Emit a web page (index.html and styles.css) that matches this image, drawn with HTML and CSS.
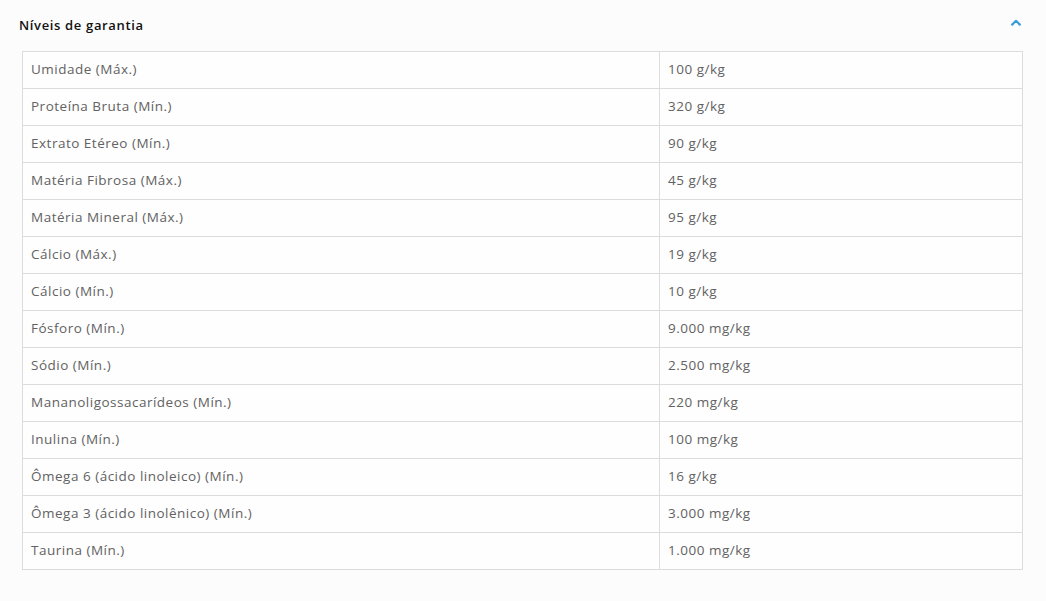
FILE: index.html
```html
<!DOCTYPE html>
<html lang="pt-BR">
<head>
<meta charset="utf-8">
<title>Níveis de garantia</title>
<link rel="stylesheet" href="styles.css">
</head>
<body>
<section class="panel">
  <header class="panel-head">
    <h2 class="panel-title">Níveis de garantia</h2>
    <svg class="chevron" width="10" height="7" viewBox="0 0 10 7" aria-hidden="true">
      <path d="M1.2 5.6 L5 1.8 L8.8 5.6" fill="none" stroke="#3a9fd8" stroke-width="2.2" stroke-linecap="round" stroke-linejoin="round"/>
    </svg>
  </header>
  <table class="levels">
    <tbody>
      <tr><td>Umidade (Máx.)</td><td>100 g/kg</td></tr>
      <tr><td>Proteína Bruta (Mín.)</td><td>320 g/kg</td></tr>
      <tr><td>Extrato Etéreo (Mín.)</td><td>90 g/kg</td></tr>
      <tr><td>Matéria Fibrosa (Máx.)</td><td>45 g/kg</td></tr>
      <tr><td>Matéria Mineral (Máx.)</td><td>95 g/kg</td></tr>
      <tr><td>Cálcio (Máx.)</td><td>19 g/kg</td></tr>
      <tr><td>Cálcio (Mín.)</td><td>10 g/kg</td></tr>
      <tr><td>Fósforo (Mín.)</td><td>9.000 mg/kg</td></tr>
      <tr><td>Sódio (Mín.)</td><td>2.500 mg/kg</td></tr>
      <tr><td>Mananoligossacarídeos (Mín.)</td><td>220 mg/kg</td></tr>
      <tr><td>Inulina (Mín.)</td><td>100 mg/kg</td></tr>
      <tr><td>Ômega 6 (ácido linoleico) (Mín.)</td><td>16 g/kg</td></tr>
      <tr><td>Ômega 3 (ácido linolênico) (Mín.)</td><td>3.000 mg/kg</td></tr>
      <tr><td>Taurina (Mín.)</td><td>1.000 mg/kg</td></tr>
    </tbody>
  </table>
</section>
</body>
</html>
```
FILE: styles.css
```css
html, body {
  margin: 0;
  padding: 0;
  background: #fdfcfd;
}
body {
  font-family: "Open Sans", "Liberation Sans", sans-serif;
  color: #555;
}
.panel-head {
  display: flex;
  align-items: center;
  justify-content: space-between;
  height: 51px;
  padding: 0 25px 0 19px;
  box-sizing: border-box;
}
.panel-title {
  margin: 0;
  font-size: 13px;
  font-weight: 600;
  color: #111;
  letter-spacing: 0.65px;
  position: relative;
  top: -1px;
}
.chevron {
  display: block;
  position: relative;
  top: -3px;
}
.levels {
  margin-left: 22px;
  width: 1001px;
  border-collapse: collapse;
  background: #fefefe;
}
.levels td {
  border: 1px solid #dcdcdc;
  height: 37px;
  padding: 0 8px 2px;
  font-size: 13.5px;
  letter-spacing: 0.5px;
  color: #626262;
  box-sizing: border-box;
  line-height: 34px;
}
.levels tr:first-child td,
.levels tr:nth-child(13) td {
  height: 36px;
}
.levels td:first-child {
  width: 637px;
}
```
